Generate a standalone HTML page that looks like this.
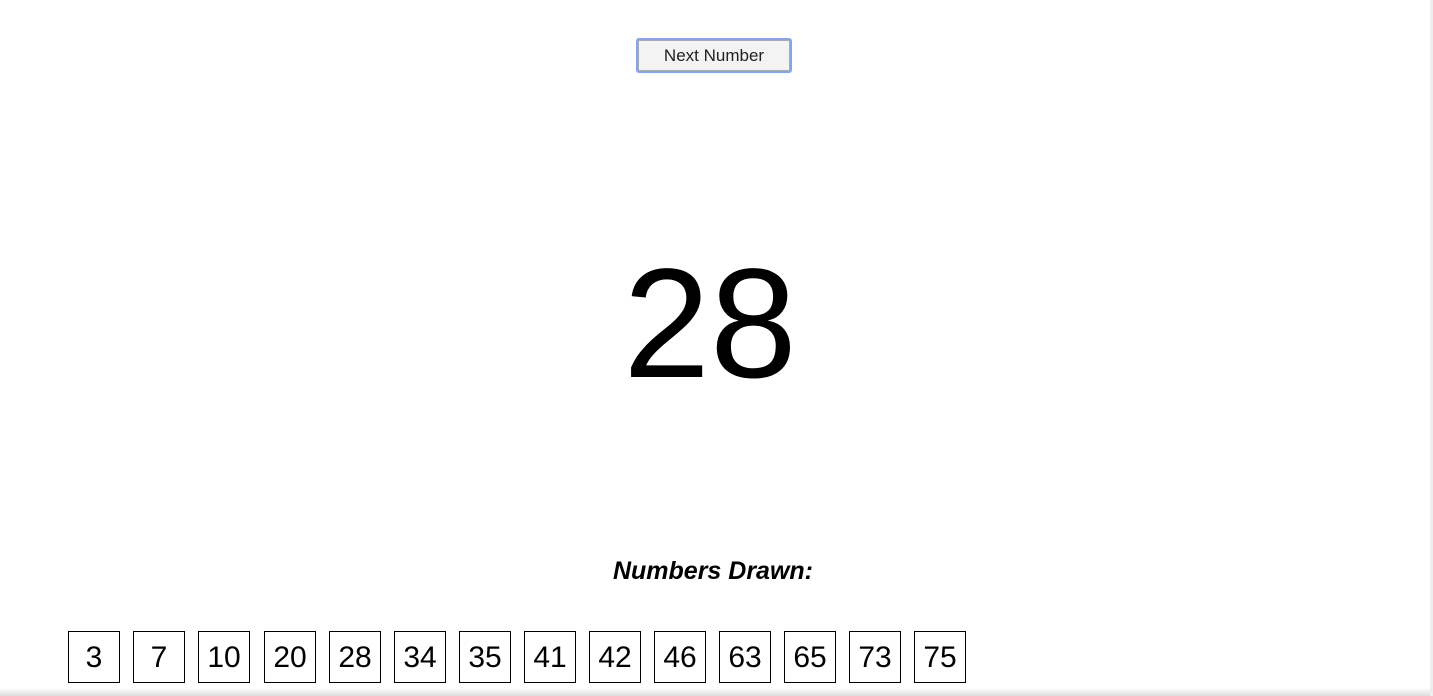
<!DOCTYPE html>
<html><head><style>
html,body{margin:0;padding:0;background:#fff;width:1433px;height:696px;overflow:hidden;position:relative;font-family:"Liberation Sans",sans-serif}
.btn{position:absolute;left:636px;top:38px;width:156px;height:35px;border:2px solid #7fa5f5;border-radius:3px;box-sizing:border-box;background:#f3f3f3;box-shadow:inset 0 0 0 1px #aaa;font-size:17px;text-align:center;line-height:32px;color:#222}
.big{position:absolute;left:0;width:1420px;top:246px;text-align:center;font-size:156px;line-height:156px;color:#000}
.lbl{position:absolute;left:0;width:1426px;top:557px;text-align:center;font-size:25px;font-style:italic;font-weight:bold}
.b{position:absolute;top:631px;width:52px;height:52px;box-sizing:border-box;border:1px solid #000;text-align:center;line-height:52px;font-size:30px}
.sb{position:absolute;left:1430px;top:0;width:3px;height:696px;background:#eee}
.bot{position:absolute;left:0;top:688px;width:1430px;height:8px;background:linear-gradient(#fff,#ddd)}
</style></head><body>
<div class="btn">Next Number</div>
<div class="big">28</div>
<div class="lbl">Numbers Drawn:</div>
<div class="b" style="left:68px">3</div>
<div class="b" style="left:133px">7</div>
<div class="b" style="left:198px">10</div>
<div class="b" style="left:264px">20</div>
<div class="b" style="left:329px">28</div>
<div class="b" style="left:394px">34</div>
<div class="b" style="left:459px">35</div>
<div class="b" style="left:524px">41</div>
<div class="b" style="left:589px">42</div>
<div class="b" style="left:654px">46</div>
<div class="b" style="left:719px">63</div>
<div class="b" style="left:784px">65</div>
<div class="b" style="left:849px">73</div>
<div class="b" style="left:914px">75</div>
<div class="bot"></div>
<div class="sb"></div>
</body></html>
